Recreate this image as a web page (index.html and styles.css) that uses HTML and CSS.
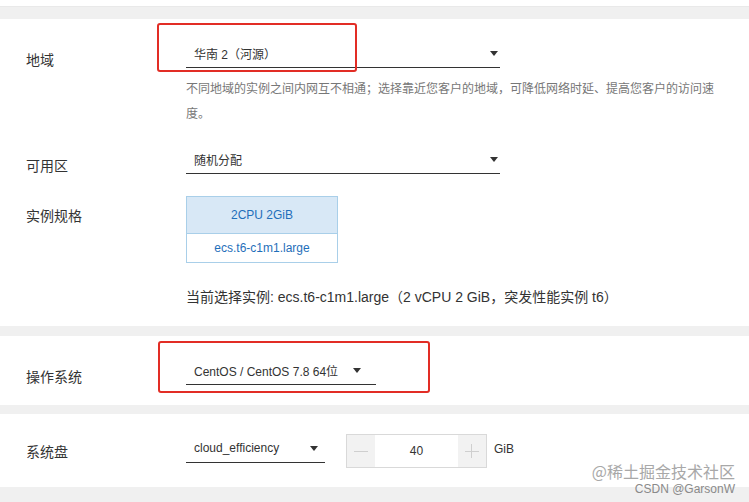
FILE: index.html
```html
<!DOCTYPE html>
<html lang="zh-CN">
<head>
<meta charset="utf-8">
<title>ECS 配置</title>
<link rel="stylesheet" href="styles.css">
</head>
<body>
<div class="topstrip"></div>
<div class="page">
  <section class="panel">
    <div class="row">
      <div class="label">地域</div>
      <div class="field">
        <div class="select select-wide"><span>华南 2（河源）</span><span class="caret"></span></div>
        <p class="hint">不同地域的实例之间内网互不相通；选择靠近您客户的地域，可降低网络时延、提高您客户的访问速度。</p>
      </div>
    </div>
    <div class="row row-zone">
      <div class="label">可用区</div>
      <div class="field">
        <div class="select select-wide"><span>随机分配</span><span class="caret"></span></div>
      </div>
    </div>
    <div class="row row-spec">
      <div class="label label-spec">实例规格</div>
      <div class="field">
        <div class="spec">
          <div class="spec-head">2CPU 2GiB</div>
          <div class="spec-body">ecs.t6-c1m1.large</div>
        </div>
        <p class="current">当前选择实例: ecs.t6-c1m1.large（2 vCPU 2 GiB，突发性能实例 t6）</p>
      </div>
    </div>
    <div class="mark mark-region"></div>
  </section>

  <section class="panel panel-os">
    <div class="row">
      <div class="label label-os">操作系统</div>
      <div class="field">
        <div class="select select-os"><span>CentOS / CentOS 7.8 64位</span><span class="caret"></span></div>
      </div>
    </div>
    <div class="mark mark-os"></div>
  </section>

  <section class="panel panel-disk">
    <div class="row">
      <div class="label label-disk">系统盘</div>
      <div class="field field-inline">
        <div class="select select-disk"><span>cloud_efficiency</span><span class="caret"></span></div>
        <div class="stepper">
          <span class="step step-minus"></span>
          <span class="step-value">40</span>
          <span class="step step-plus"></span>
        </div>
        <span class="unit">GiB</span>
      </div>
    </div>
  </section>
</div>
<div class="watermark">
  <div class="wm-juejin">@稀土掘金技术社区</div>
  <div class="wm-csdn">CSDN @GarsonW</div>
</div>
</body>
</html>
```

FILE: styles.css
```css
* { box-sizing: border-box; }

html, body {
  margin: 0;
  padding: 0;
}

body {
  background: #f0f0f0;
  font-family: "Liberation Sans", "Noto Sans CJK SC", sans-serif;
  color: #333;
  height: 502px;
  overflow: hidden;
  position: relative;
}

.topstrip {
  height: 7px;
  background: #fff;
  border-bottom: 1px solid #e9e9e9;
}

.page {
  margin-top: 12px;
  display: flex;
  flex-direction: column;
  gap: 10px;
}

.panel {
  position: relative;
  background: #fff;
  padding: 20px 0 19px 26px;
}

.panel-disk {
  margin-top: -1px;
  padding-bottom: 19px;
}

.row {
  display: flex;
  align-items: flex-start;
}

.row-zone { margin-top: 18px; }
.row-spec { margin-top: 21px; }

.label {
  width: 160px;
  flex: none;
  font-size: 14px;
  line-height: 20px;
  padding-top: 10px;
  color: #333;
  font-family: "Noto Sans CJK SC", sans-serif;
}

.label-spec { padding-top: 9px; }
.label-os { padding-top: 10px; }
.label-disk { padding-top: 7px; }

.field {
  flex: none;
}

.field-inline {
  display: flex;
  align-items: flex-start;
}

.select {
  display: flex;
  align-items: center;
  height: 29px;
  border-bottom: 1px solid #333;
  padding-left: 8px;
  font-size: 12px;
  color: #333;
}

.select .caret {
  margin-left: auto;
  width: 0;
  height: 0;
  border-left: 4.5px solid transparent;
  border-right: 4.5px solid transparent;
  border-top: 5px solid #333;
  margin-top: 1px;
}

.select-wide { width: 314px; padding-right: 2px; }
.select-os { width: 190px; padding-right: 15px; }
.select-disk { width: 139px; padding-right: 7px; }

.hint {
  margin: 9px 0 0;
  width: 535px;
  font-size: 12px;
  line-height: 25px;
  color: #777;
}

.spec {
  width: 152px;
  border: 1px solid #a9cfe9;
  color: #1f6fba;
  font-size: 12px;
  text-align: center;
}

.spec-head {
  height: 37px;
  line-height: 37px;
  background: #d8e8f6;
  border-bottom: 1px solid #a9cfe9;
}

.spec-body {
  height: 28px;
  line-height: 28px;
  background: #fff;
}

.current {
  margin: 24px 0 0;
  font-size: 14px;
  line-height: 20px;
  color: #333;
}

.stepper {
  margin-left: 21px;
  width: 141px;
  height: 34px;
  border: 1px solid #d9d9d9;
  display: flex;
}

.step {
  width: 28px;
  background: #f2f2f2;
  position: relative;
}

.step-plus { margin-left: auto; }

.step::before,
.step-plus::after {
  content: "";
  position: absolute;
  background: #cfcfcf;
}

.step::before {
  left: 7px;
  right: 7px;
  top: 16px;
  height: 1px;
}

.step-plus::after {
  top: 9px;
  bottom: 9px;
  left: 13px;
  width: 1px;
}

.step-value {
  flex: 1;
  text-align: center;
  line-height: 32px;
  font-size: 12px;
  color: #333;
}

.unit {
  margin-left: 7px;
  font-size: 12px;
  line-height: 30px;
  color: #333;
}

.mark {
  position: absolute;
  border: 2.5px solid #e22d25;
  border-radius: 3px;
}

.mark-region {
  left: 157px;
  top: 4px;
  width: 200px;
  height: 49px;
}

.mark-os {
  left: 158px;
  top: 5px;
  width: 272px;
  height: 52px;
}

.watermark {
  position: absolute;
  right: 14px;
  top: 463px;
  text-align: right;
  pointer-events: none;
}

.wm-juejin {
  font-family: "Noto Sans CJK SC", sans-serif;
  font-size: 16px;
  line-height: 16px;
  color: #a8a8a8;
}

.wm-csdn {
  margin-top: 4px;
  font-size: 12px;
  line-height: 13px;
  color: #8a8a8a;
}
```
